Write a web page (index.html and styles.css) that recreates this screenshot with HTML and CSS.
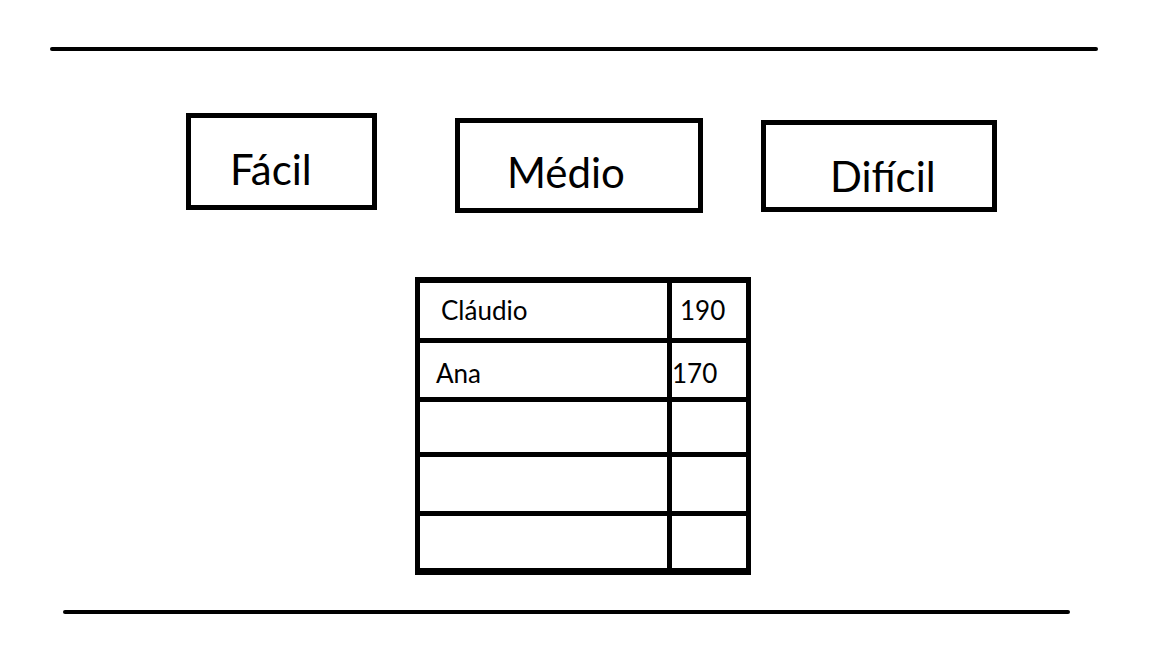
FILE: index.html
```html
<!doctype html>
<html class="ranking-html" lang="pt">
<head>
    <meta charset="utf-8">
    <title>Ranking</title>
    <meta name="viewport" content="width=device-width, initial-scale=1">

    <link rel="stylesheet" href="styles.css">
</head>

<body class="ranking-body">
<hr class="ranking-rule ranking-rule-top">

<nav class="ranking-levels">
    <button class="ranking-level ranking-level-easy">Fácil</button>
    <button class="ranking-level ranking-level-medium">Médio</button>
    <button class="ranking-level ranking-level-hard">Difícil</button>
</nav>

<main class="ranking-board">
    <div class="ranking-row ranking-row-1">
        <div class="ranking-name">Cláudio</div>
        <div class="ranking-score">190</div>
    </div>
    <div class="ranking-row ranking-row-2">
        <div class="ranking-name">Ana</div>
        <div class="ranking-score ranking-score-tight">170</div>
    </div>
    <div class="ranking-row ranking-row-3">
        <div class="ranking-name"></div>
        <div class="ranking-score"></div>
    </div>
    <div class="ranking-row ranking-row-4">
        <div class="ranking-name"></div>
        <div class="ranking-score"></div>
    </div>
    <div class="ranking-row ranking-row-5">
        <div class="ranking-name"></div>
        <div class="ranking-score"></div>
    </div>
</main>

<hr class="ranking-rule ranking-rule-bottom">
</body>
</html>
```

FILE: styles.css
```css
.ranking-html {
    height: 100%;
}

.ranking-body {
    margin: 0;
    background: #FFFFFF;
    color: #000000;
    font-family: "Lato", "Liberation Sans", sans-serif;
    overflow: hidden;
}

.ranking-rule {
    border: 0;
    height: 4px;
    background: #000000;
    border-radius: 2px;
    margin: 0;
}

.ranking-rule-top {
    margin: 47px 0 0 50px;
    width: 1048px;
}

.ranking-rule-bottom {
    margin: 35px 0 0 63px;
    width: 1007px;
}

/* level buttons */
.ranking-levels {
    display: flex;
    align-items: flex-start;
    margin-top: 62px;
    padding-left: 186px;
}

.ranking-level {
    box-sizing: border-box;
    display: block;
    margin: 0;
    border: 5px solid #000000;
    background: #FFFFFF;
    color: #000000;
    font-family: inherit;
    font-size: 42px;
    line-height: 48px;
    text-align: left;
    cursor: pointer;
}

.ranking-level-easy {
    width: 191px;
    height: 97px;
    padding: 15px 0 0 39px;
}

.ranking-level-medium {
    width: 248px;
    height: 95px;
    margin: 5px 0 0 78px;
    padding: 13px 0 0 47px;
}

.ranking-level-hard {
    width: 236px;
    height: 92px;
    margin: 7px 0 0 58px;
    padding: 20px 0 0 64px;
}

/* score table */
.ranking-board {
    box-sizing: border-box;
    width: 336px;
    margin: 64px 0 0 415px;
    border: 5px solid #000000;
    border-top-width: 6px;
    border-bottom-width: 7px;
    font-size: 26px;
    line-height: 31px;
}

.ranking-row {
    display: grid;
    grid-template-columns: 252px 74px;
    border-bottom: 5px solid #000000;
}

.ranking-row:last-child {
    border-bottom: 0;
}

.ranking-row-1 { height: 55px; }
.ranking-row-2 { height: 54px; }
.ranking-row-3 { height: 50px; }
.ranking-row-4 { height: 54px; }
.ranking-row-5 { height: 52px; }

.ranking-name,
.ranking-score {
    display: flex;
    align-items: center;
}

.ranking-name {
    border-right: 5px solid #000000;
    padding-left: 21px;
}

.ranking-row-2 .ranking-name,
.ranking-row-2 .ranking-score {
    padding-top: 6px;
}

.ranking-row-2 .ranking-name {
    padding-left: 16px;
}

.ranking-score {
    padding-left: 8px;
}

.ranking-score-tight {
    padding-left: 0;
}
```
